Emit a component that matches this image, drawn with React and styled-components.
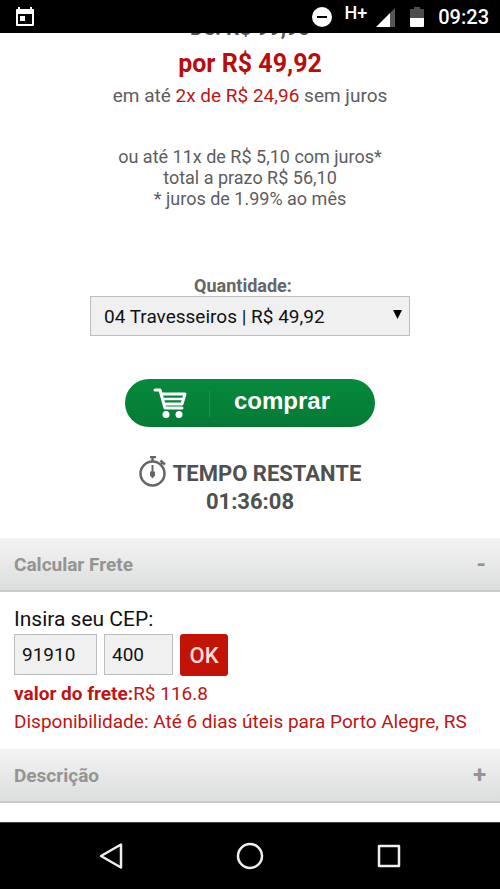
import React from "react";
import styled, { createGlobalStyle } from "styled-components";

const GlobalStyle = createGlobalStyle`
  *, *::before, *::after { box-sizing: border-box; }
  body { margin: 0; background: #fff; font-family: Roboto, "Liberation Sans", sans-serif; }
  button, input, select { font-family: inherit; }
`;

const Screen = styled.div`
  display: flex;
  flex-direction: column;
  height: 100vh;
`;

const StatusBar = styled.header`
  display: flex;
  align-items: center;
  justify-content: space-between;
  flex: none;
  height: 33px;
  padding: 0 11px 0 16px;
  background: #000;
  color: #fff;
  svg { display: block; }
`;

const StatusGroup = styled.div`
  display: flex;
  align-items: center;
  padding-top: 1px;
`;

const Network = styled.span`
  margin: 0 9px 8px 12px;
  font-size: 18px;
  line-height: 18px;
  font-weight: 500;
`;

const Battery = styled.span`
  margin: 0 14px 0 15px;
`;

const Clock = styled.time`
  font-size: 20px;
  line-height: 24px;
  font-weight: 500;
`;

const Viewport = styled.main`
  flex: 1;
  min-height: 0;
  overflow: hidden;
`;

const Product = styled.section`
  display: flex;
  flex-direction: column;
  align-items: center;
  margin-top: -19px;
  padding-bottom: 22px;
  color: #5d5d5d;
  text-align: center;
`;

const OldPrice = styled.s`
  font-size: 21px;
  line-height: 28px;
  font-weight: 700;
  color: #555;
  text-decoration: none;
`;

const Price = styled.strong`
  margin-top: 6px;
  font-size: 25px;
  line-height: 32px;
  color: #b90d0d;
`;

const Installments = styled.p`
  margin: 2px 0 36px;
  font-size: 19px;
  line-height: 28px;
  span { color: #c01515; }
`;

const Credit = styled.p`
  margin: 0;
  font-size: 18px;
  line-height: 21px;
`;

const Quantity = styled.div`
  display: flex;
  flex-direction: column;
  align-items: center;
  width: 64%;
  margin-top: 66px;
`;

const QuantityLabel = styled.label`
  padding-right: 14px;
  font-size: 18px;
  line-height: 21px;
  font-weight: 700;
  color: #666;
`;

const SelectBox = styled.div`
  position: relative;
  width: 100%;
  svg {
    position: absolute;
    right: 8px;
    top: 14px;
    pointer-events: none;
  }
`;

const Select = styled.select`
  display: block;
  appearance: none;
  width: 100%;
  height: 40px;
  padding: 0 28px 0 13px;
  border: 1px solid #bdbdbd;
  border-radius: 0;
  background: #f0f0f0;
  color: #111;
  font-size: 19px;
`;

const BuyButton = styled.button`
  display: flex;
  align-items: center;
  width: 50%;
  height: 48px;
  margin-top: 43px;
  padding: 0 0 0 28px;
  border: 0;
  border-radius: 24px;
  background: linear-gradient(#058a3c, #067a35);
  color: #fff;
  svg { display: block; flex: none; }
`;

const BuyText = styled.span`
  flex: 1;
  margin-left: 22px;
  padding: 0 21px 5px 0;
  border-left: 1px solid #2b8a4c;
  font: 700 24px/22px "Liberation Sans", sans-serif;
  text-align: center;
`;

const Countdown = styled.div`
  margin-top: 28px;
  font-size: 22px;
  line-height: 28px;
  font-weight: 700;
  color: #505050;
`;

const CountdownTitle = styled.div`
  display: flex;
  align-items: center;
  justify-content: center;
  gap: 6px;
  height: 33px;
  padding-top: 5px;
  svg { margin-bottom: 6px; }
`;

const PanelHeader = styled.button`
  display: flex;
  align-items: center;
  justify-content: space-between;
  width: 100%;
  height: 54px;
  padding: 0 14px;
  border: 0;
  border-bottom: 2px solid #c9caca;
  background: linear-gradient(#f3f3f3, #dcdedd);
  color: #949494;
  font-size: 19px;
  font-weight: 700;
  text-align: left;
`;

const PanelMark = styled.span`
  font-size: 24px;
  line-height: 24px;
`;

const Shipping = styled.form`
  padding: 13px 14px;
  font-size: 19px;
  line-height: 28px;
  color: #c01414;
`;

const CepLabel = styled.label`
  display: block;
  font-size: 21px;
  line-height: 29px;
  color: #111;
`;

const CepRow = styled.div`
  display: flex;
  gap: 7px;
  margin-bottom: 4px;
`;

const CepInput = styled.input`
  width: ${(p) => (p.$short ? 69 : 83)}px;
  height: 41px;
  padding: 0 7px;
  border: 1px solid #bdbdbd;
  border-radius: 0;
  background: #f0f0f0;
  color: #111;
  font-size: 19px;
`;

const OkButton = styled.button`
  width: 48px;
  height: 42px;
  padding: 0;
  border: 0;
  border-radius: 3px;
  background: #c21305;
  color: #fbdcd8;
  font-size: 22px;
  font-weight: 500;
`;

const Result = styled.div``;

const NavBar = styled.nav`
  display: flex;
  align-items: center;
  justify-content: space-around;
  flex: none;
  height: 67px;
  padding: 0 42px;
  border-top: 1px solid #444;
  background: #000;
`;

const NavButton = styled.button`
  display: flex;
  padding: 0;
  border: 0;
  background: none;
`;

function Header() {
  return (
    <StatusBar>
      <svg width="18" height="21" viewBox="0 0 18 21" aria-hidden="true">
        <path fill="#fff" fillRule="evenodd" d="M2 1h2v2h10V1h2v2h1q1 0 1 1v15q0 1-1 1H1q-1 0-1-1V4q0-1 1-1h1zM2 8v10h14V8z" />
        <path fill="#fff" d="M4 10h5v5H4z" />
      </svg>
      <StatusGroup>
        <svg width="20" height="20" viewBox="0 0 20 20" aria-hidden="true">
          <circle cx="10" cy="10" r="10" fill="#fff" />
          <path d="M5 10h10" stroke="#000" strokeWidth="2" />
        </svg>
        <Network>H+</Network>
        <svg width="19" height="19" viewBox="0 0 19 19" aria-hidden="true">
          <path d="M14 5l5-5v19h-5z" fill="#555" />
          <path d="M0 19L14 5v14z" fill="#fff" />
        </svg>
        <Battery>
          <svg width="14" height="20" viewBox="0 0 14 20" aria-hidden="true">
            <path d="M1 2h3V0h6v2h3q1 0 1 1v8H0V3q0-1 1-1z" fill="#4d4d4d" />
            <path d="M0 11h14v8q0 1-1 1H1q-1 0-1-1z" fill="#fff" />
          </svg>
        </Battery>
        <Clock>09:23</Clock>
      </StatusGroup>
    </StatusBar>
  );
}

function CartIcon() {
  return (
    <svg width="34" height="31" viewBox="0 0 34 31" fill="none" stroke="#fff" aria-hidden="true">
      <path d="M2 2h5l5 18h17" strokeWidth="3" strokeLinecap="round" strokeLinejoin="round" />
      <path d="M8 6h24l-3 10H11" strokeWidth="3" strokeLinejoin="round" />
      <path d="M10 11h20" strokeWidth="2.500" />
      <circle cx="13" cy="26.500" r="3.500" fill="#fff" stroke="none" />
      <circle cx="26" cy="26.500" r="3.500" fill="#fff" stroke="none" />
    </svg>
  );
}

function StopwatchIcon() {
  return (
    <svg width="28" height="31" viewBox="0 0 28 31" fill="none" stroke="#666" aria-hidden="true">
      <circle cx="13.500" cy="17.500" r="12" strokeWidth="2.500" />
      <path d="M11 1h6M13.500 1v5M22 8l2-2M21.500 4.500l4.500 4" strokeWidth="2.400" />
      <path d="M13.500 9v12" strokeWidth="2" />
      <path d="M11 15.500h5v4l-2.500 3-2.500-3z" fill="#666" stroke="none" />
    </svg>
  );
}

export default function App() {
  return (
    <Screen>
      <GlobalStyle />
      <Header />
      <Viewport>
        <Product>
          <OldPrice>De: R$ 99,90</OldPrice>
          <Price>por R$ 49,92</Price>
          <Installments>
            em até <span>2x de R$ 24,96</span> sem juros
          </Installments>
          <Credit>
            ou até 11x de R$ 5,10 com juros*
            <br />
            total a prazo R$ 56,10
            <br />* juros de 1.99% ao mês
          </Credit>
          <Quantity>
            <QuantityLabel htmlFor="quantity">Quantidade:</QuantityLabel>
            <SelectBox>
              <Select id="quantity" defaultValue="4">
                <option value="4">04 Travesseiros | R$ 49,92</option>
              </Select>
              <svg width="9" height="9" viewBox="0 0 9 9" aria-hidden="true">
                <path d="M0 0h9L4.500 9z" fill="#000" />
              </svg>
            </SelectBox>
          </Quantity>
          <BuyButton type="button">
            <CartIcon />
            <BuyText>comprar</BuyText>
          </BuyButton>
          <Countdown>
            <CountdownTitle>
              <StopwatchIcon />
              <span>TEMPO RESTANTE</span>
            </CountdownTitle>
            <time>01:36:08</time>
          </Countdown>
        </Product>
        <PanelHeader type="button" aria-expanded="true">
          <span>Calcular Frete</span>
          <PanelMark>-</PanelMark>
        </PanelHeader>
        <Shipping onSubmit={(e) => e.preventDefault()}>
          <CepLabel htmlFor="cep">Insira seu CEP:</CepLabel>
          <CepRow>
            <CepInput id="cep" defaultValue="91910" />
            <CepInput $short aria-label="Complemento do CEP" defaultValue="400" />
            <OkButton type="submit">OK</OkButton>
          </CepRow>
          <Result>
            <strong>valor do frete:</strong>R$ 116.8
          </Result>
          <Result>Disponibilidade: Até 6 dias úteis para Porto Alegre, RS</Result>
        </Shipping>
        <PanelHeader type="button" aria-expanded="false">
          <span>Descrição</span>
          <PanelMark>+</PanelMark>
        </PanelHeader>
      </Viewport>
      <NavBar>
        <NavButton type="button" aria-label="Voltar">
          <svg width="26" height="28" viewBox="0 0 26 28" fill="none" stroke="#eee" strokeWidth="2.500" strokeLinejoin="round" aria-hidden="true">
            <path d="M3 14L23 2.500v23z" />
          </svg>
        </NavButton>
        <NavButton type="button" aria-label="Início">
          <svg width="28" height="28" viewBox="0 0 28 28" fill="none" stroke="#eee" strokeWidth="2.500" aria-hidden="true">
            <circle cx="14" cy="14" r="12" />
          </svg>
        </NavButton>
        <NavButton type="button" aria-label="Recentes">
          <svg width="26" height="28" viewBox="0 0 26 28" fill="none" stroke="#eee" strokeWidth="2.500" strokeLinejoin="round" aria-hidden="true">
            <path d="M3 4h20v20H3z" />
          </svg>
        </NavButton>
      </NavBar>
    </Screen>
  );
}
